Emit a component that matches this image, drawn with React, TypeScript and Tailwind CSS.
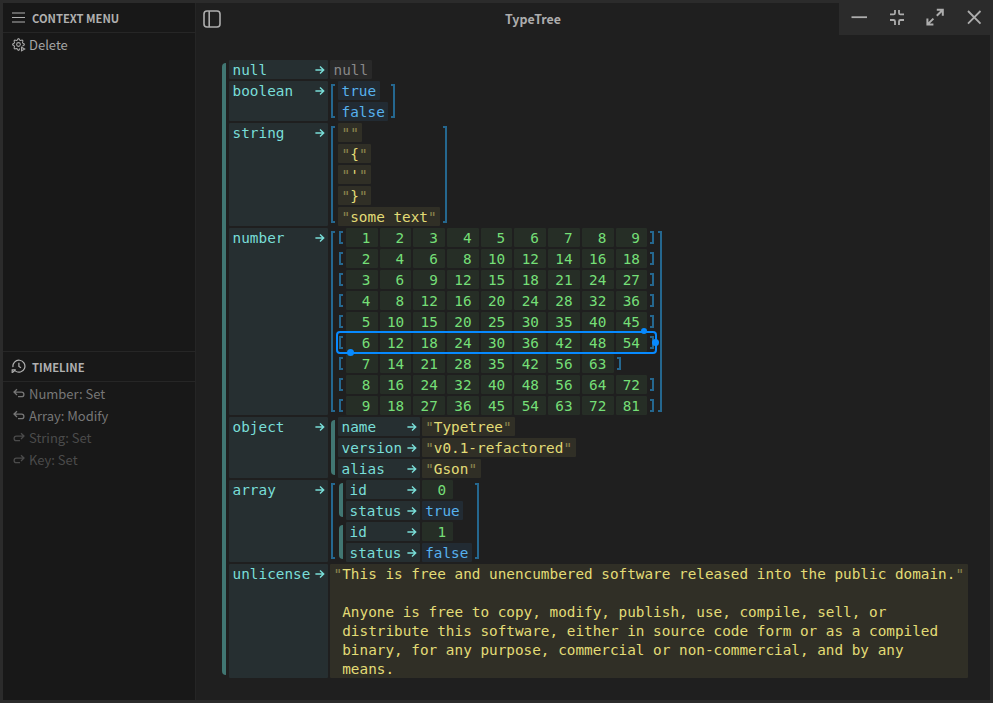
import type { ReactNode } from "react";

function Arrow() {
  return (
    <svg className="mt-[5px] h-[10px] w-[10px] shrink-0" viewBox="0 0 10 10" fill="none" stroke="currentColor" strokeWidth="1.4">
      <path d="M.4 5H8.8M5 1.5L8.7 5L5 8.5" />
    </svg>
  );
}

function Key({ name, width }: { name: string; width: string }) {
  return (
    <div className={`flex shrink-0 justify-between rounded-[1px] bg-[#262f31] pl-[3.6px] pr-[3px] text-[#79ded8] ${width}`}>
      <span className="relative top-px">{name}</span>
      <Arrow />
    </div>
  );
}

function Obj({ children }: { children: ReactNode }) {
  return (
    <div className="flex">
      <div className="my-[3px] ml-px mr-[3px] w-1 shrink-0 rounded-l-[4px] bg-[#417672]" />
      <div className="flex flex-col gap-[2px]">{children}</div>
    </div>
  );
}

function Entry({ name, width, children }: { name: string; width: string; children: ReactNode }) {
  return (
    <div className="flex gap-[2px]">
      <Key name={name} width={width} />
      <div className="flex items-start">{children}</div>
    </div>
  );
}

function Arr({ row = false, children }: { row?: boolean; children: ReactNode }) {
  return (
    <div className="flex">
      <div className="my-[3px] ml-px mr-[3px] w-1 shrink-0 border-2 border-r-0 border-[#25678f]" />
      <div className={row ? "flex gap-[2px]" : "flex flex-col items-start gap-[2px]"}>{children}</div>
      <div className="my-[3px] ml-[3px] mr-px w-1 shrink-0 border-2 border-l-0 border-[#25678f]" />
    </div>
  );
}

function Bool({ value }: { value: string }) {
  return (
    <div className="rounded-[1px] bg-[#222b33] px-[3.6px] text-[#57b1ee]">
      <span className="relative top-px">{value}</span>
    </div>
  );
}

function Num({ value }: { value: number }) {
  return (
    <div className="w-[31.7px] shrink-0 rounded-[1px] bg-[#262e26] pr-[7.2px] text-right text-[#75df77]">
      <span className="relative top-px">{value}</span>
    </div>
  );
}

function Str({ value }: { value: string }) {
  return (
    <div className="rounded-[1px] bg-[#302f26] px-[3.6px] text-[#e3dc76]">
      <div className="relative top-px flex">
        <span className="opacity-50">"</span>
        <span className="whitespace-pre">{value}</span>
        <span className="opacity-50">"</span>
      </div>
    </div>
  );
}

const table = [1, 2, 3, 4, 5, 6, 7, 8, 9].map((r) =>
  r === 7 ? [7, 14, 21, 28, 35, 42, 56, 63] : [1, 2, 3, 4, 5, 6, 7, 8, 9].map((c) => r * c),
);

const licenseText = `This is free and unencumbered software released into the public domain.

Anyone is free to copy, modify, publish, use, compile, sell, or
distribute this software, either in source code form or as a compiled
binary, for any purpose, commercial or non-commercial, and by any
means.`;

function Selection() {
  return (
    <div className="absolute -inset-[2px] z-10 rounded-[4px] border-2 border-[#078aff]">
      <i className="absolute -bottom-[4px] left-[9px] size-[7px] rounded-full bg-[#078aff]" />
      <i className="absolute -top-[5px] right-[8px] size-[6px] rounded-full bg-[#078aff]" />
      <i className="absolute -right-[4px] top-[6px] size-[7px] rounded-full bg-[#078aff]" />
    </div>
  );
}

// Outline of an eight-toothed gear around (6.5, 6.5).
const gearPoints = Array.from({ length: 64 }, (_, i) => {
  const a = (i / 64) * Math.PI * 2;
  const r = 5.1 + 0.75 * Math.cos(8 * a);
  return `${(6.5 + r * Math.cos(a)).toFixed(2)},${(6.5 + r * Math.sin(a)).toFixed(2)}`;
}).join(" ");

function GearPlay() {
  return (
    <svg className="size-[14px]" viewBox="0 0 14 14" fill="none" stroke="currentColor" strokeWidth="1.1">
      <polygon points={gearPoints} />
      <circle cx="6.5" cy="6.5" r="1.9" />
      <path d="M8 7.6V14H14V9.5Z" fill="#181818" stroke="none" />
      <path d="M9.5 9.2V12.8L12.7 11Z" />
    </svg>
  );
}

function History() {
  return (
    <svg className="size-[15px]" viewBox="0 0 15 15" fill="none" stroke="currentColor" strokeWidth="1.2">
      <path d="M2 8.2A6 6 0 1 1 4.2 11.9" />
      <path d="M1.2 14V10.8H4.8" />
      <path d="M1.4 13.6L4.2 11" />
      <path d="M7.9 3.8V7.4L10 8.8" />
    </svg>
  );
}

function Undo({ flip = false }: { flip?: boolean }) {
  return (
    <svg className={`size-[12px] ${flip ? "-scale-x-100" : ""}`} viewBox="0 0 12 12" fill="none" stroke="currentColor" strokeWidth="1.3">
      <path d="M4 1.2L1 4.1L4 7M1 4.1H8.6A2.3 2.3 0 0 1 8.6 8.7H5" />
    </svg>
  );
}

function HistoryItem({ label, redo = false }: { label: string; redo?: boolean }) {
  return (
    <div className={`flex h-[22px] items-center pl-[10px] text-[13px] ${redo ? "text-[#4b4b4b]" : "text-[#777777]"}`}>
      <Undo flip={redo} />
      <span className="ml-[4px]">{label}</span>
    </div>
  );
}

const w1 = "w-[99px]";

export default function App() {
  return (
    <div className="flex h-[703px] w-[993px] overflow-hidden border-[3px] border-[#2b2b2b] bg-[#1f1f1f] font-['Noto_Sans_CJK_SC',sans-serif]">
      <aside className="flex w-[193px] shrink-0 flex-col border-r border-[#252525] bg-[#181818]">
        <header className="flex h-[30px] shrink-0 items-center border-b border-[#262626] pl-[9px] text-[11.2px] font-bold text-[#b0b0b0]">
          <svg className="h-[11px] w-[13px]" viewBox="0 0 13 11" stroke="currentColor" strokeWidth="1.2">
            <path d="M0 1H13M0 5.5H13M0 10H13" />
          </svg>
          <span className="ml-[7px] mt-px">CONTEXT MENU</span>
        </header>
        <div className="mt-px flex h-[22px] items-center pl-[9px] text-[13px] text-[#a5a5a5]">
          <GearPlay />
          <span className="ml-[3px]">Delete</span>
        </div>
        <header className="mt-[295px] flex h-[31px] shrink-0 items-center border-y border-[#262626] pl-[8px] text-[11.2px] font-bold text-[#b0b0b0]">
          <History />
          <span className="ml-[6px] mt-[2px]">TIMELINE</span>
        </header>
        <div className="mt-px">
          <HistoryItem label="Number: Set" />
          <HistoryItem label="Array: Modify" />
          <HistoryItem label="String: Set" redo />
          <HistoryItem label="Key: Set" redo />
        </div>
      </aside>

      <main className="flex min-w-0 flex-1 flex-col">
        <header className="flex h-[32px] shrink-0 items-center text-[#adadad]">
          <svg className="ml-[7px] size-[18px] shrink-0" viewBox="0 0 18 18" fill="none" stroke="currentColor" strokeWidth="1.6">
            <rect x="1" y="1" width="16" height="16" rx="3" />
            <path d="M6.2 1V17" />
          </svg>
          <div className="ml-[6px] flex-1 text-center text-[12.4px] font-bold leading-[32px]">TypeTree</div>
          <svg className="h-[32px] w-[151px] shrink-0 bg-[#2b2b2b]" viewBox="839 3 151 32" fill="none" stroke="#adadad" strokeWidth="1.8">
            <path d="M851.5 17.2H867" />
            <path d="M890 14.4H893.5Q895 14.4 895 13V10M904 14.4H900.5Q899 14.4 899 13V10M890 20H893.5Q895 20 895 21.5V25M904 20H900.5Q899 20 899 21.5V25" />
            <path strokeWidth="2" d="M936.8 15.8L942.6 10M936.8 9.7H942.8V15.8M933.4 18.6L927.6 24.4M927.4 18.6V24.6H933.4" />
            <path d="M968 11L980.5 23.6M980.5 11L968 23.6" />
          </svg>
        </header>

        <div className="ml-[25px] mt-[25px] font-['DejaVu_Sans_Mono',monospace] text-[14.35px] leading-[19px]">
          <Obj>
            <Entry name="null" width={w1}>
              <div className="rounded-[1px] bg-[#292929] px-[3.6px] text-[#888888]">
                <span className="relative top-px">null</span>
              </div>
            </Entry>
            <Entry name="boolean" width={w1}>
              <Arr>
                <Bool value="true" />
                <Bool value="false" />
              </Arr>
            </Entry>
            <Entry name="string" width={w1}>
              <Arr>
                <Str value="" />
                <Str value="{" />
                <Str value="'" />
                <Str value="}" />
                <Str value="some text" />
              </Arr>
            </Entry>
            <Entry name="number" width={w1}>
              <Arr>
                {table.map((cells, i) => (
                  <div key={i} className="relative">
                    <Arr row>
                      {cells.map((n) => (
                        <Num key={n} value={n} />
                      ))}
                    </Arr>
                    {i === 5 && <Selection />}
                  </div>
                ))}
              </Arr>
            </Entry>
            <Entry name="object" width={w1}>
              <Obj>
                <Entry name="name" width="w-[81.6px]"><Str value="Typetree" /></Entry>
                <Entry name="version" width="w-[81.6px]"><Str value="v0.1-refactored" /></Entry>
                <Entry name="alias" width="w-[81.6px]"><Str value="Gson" /></Entry>
              </Obj>
            </Entry>
            <Entry name="array" width={w1}>
              <Arr>
                {[0, 1].map((id) => (
                  <Obj key={id}>
                    <Entry name="id" width="w-[73.6px]"><Num value={id} /></Entry>
                    <Entry name="status" width="w-[73.6px]"><Bool value={id === 0 ? "true" : "false"} /></Entry>
                  </Obj>
                ))}
              </Arr>
            </Entry>
            <Entry name="unlicense" width={w1}>
              <Str value={licenseText} />
            </Entry>
          </Obj>
        </div>
      </main>
    </div>
  );
}
